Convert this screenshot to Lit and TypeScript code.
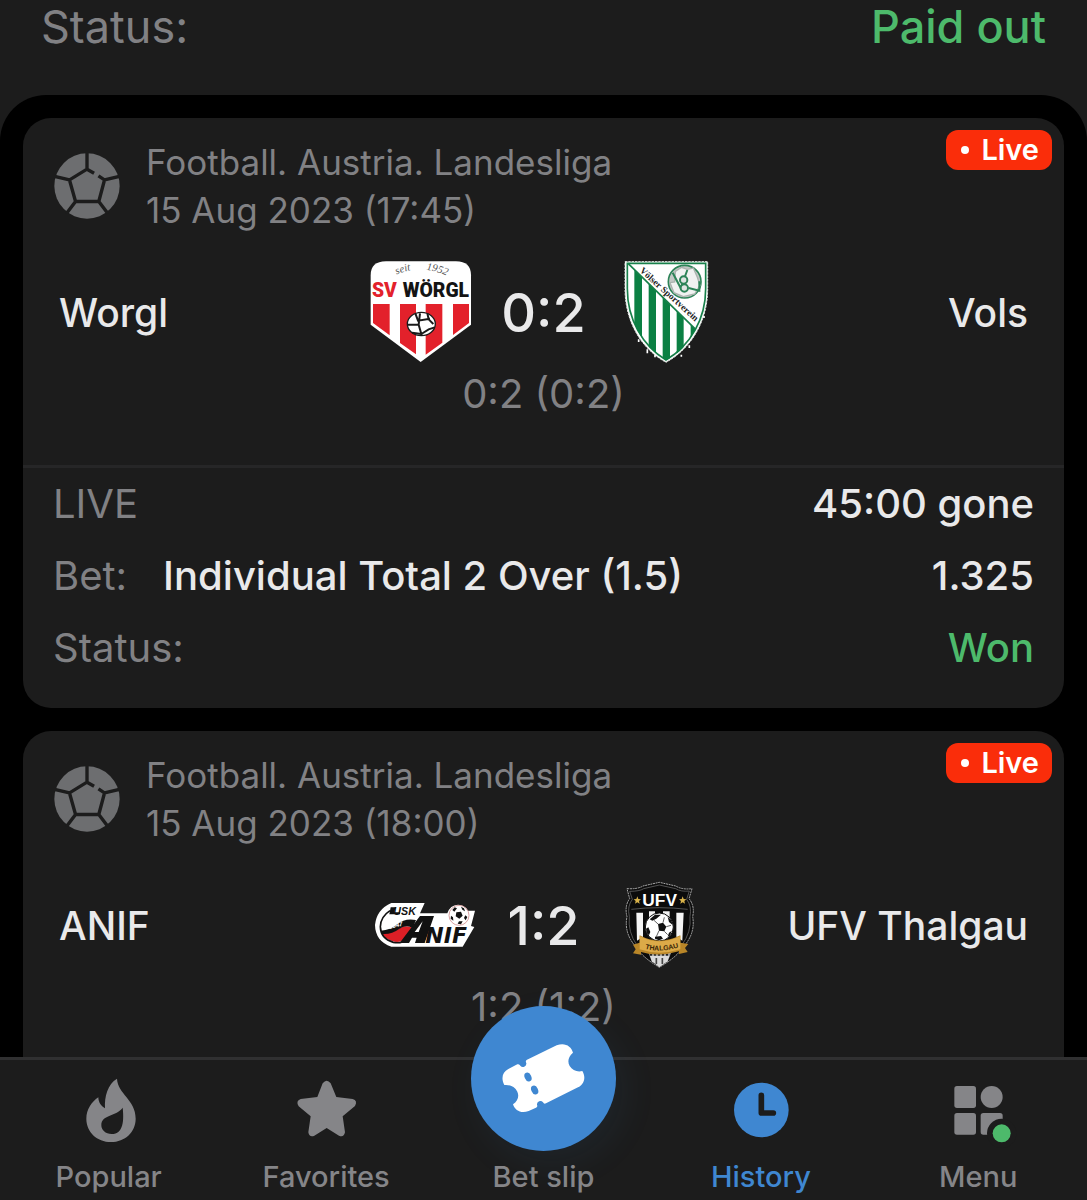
import { LitElement, html, css, nothing } from "lit";
import type { TemplateResult } from "lit";
import { customElement, property } from "lit/decorators.js";
import { classMap } from "lit/directives/class-map.js";

interface Bet {
  time: string;
  name: string;
  odds: string;
  status: string;
}

interface Match {
  league: string;
  date: string;
  home: string;
  away: string;
  homeCrest: TemplateResult;
  awayCrest: TemplateResult;
  score: string;
  periods: string;
  bet?: Bet;
}

interface Tab {
  label: string;
  href: string;
  icon: TemplateResult;
  active?: boolean;
  raised?: boolean;
}

const worglCrest = html`
  <svg viewBox="63 50 300 300" role="img" aria-label="SV Wörgl crest">
    <path d="M62 90Q62 48 108 48H318Q363 48 363 90V238L212 350L62 238Z" fill="#fff" />
    <path d="M69 176H119V270L69 233ZM150 176H198V327L150 293ZM227 176H277V292L227 328ZM309 176H357V233L309 269Z" fill="#e3212b" />
    <path id="worgl-arc" d="M126 94Q214 48 308 100" fill="none" />
    <g font-family="Liberation Serif, serif" font-style="italic" font-size="32" fill="#555">
      <text><textPath href="#worgl-arc" startOffset="8%">seit</textPath></text>
      <text><textPath href="#worgl-arc" startOffset="56%">1952</textPath></text>
    </g>
    <g font-family="Roboto, Liberation Sans, sans-serif" font-weight="900" font-size="58">
      <text x="66" y="156" fill="#e3212b">SV</text>
      <text x="158" y="156" fill="#141414">WÖRGL</text>
    </g>
    <ellipse cx="214" cy="236" rx="42" ry="35" fill="#fff" stroke="#1a1a1a" stroke-width="4" />
    <path d="M196 204L204 226L240 220M172 238H206L214 266L186 262M206 238L210 204M232 204L236 222L250 236M214 266L236 252L254 246" fill="none" stroke="#1a1a1a" stroke-width="6" />
  </svg>
`;

const volsCrest = html`
  <svg viewBox="48 50 300 300" role="img" aria-label="Völser Sportverein crest">
    <defs>
      <clipPath id="vols-field">
        <path d="M85 55L286 251C268 292 240 325 198 345C122 300 84 220 84 130Z" />
      </clipPath>
    </defs>
    <path d="M75 49H323V130C323 225 276 308 198 351C120 308 75 225 75 130Z" fill="#fff" stroke="#dfe8e2" stroke-width="3" stroke-dasharray="7 3" />
    <path d="M82 54H317V130C317 220 272 300 198 344C126 300 82 220 82 130Z" fill="#fff" stroke="#17804a" stroke-width="5" />
    <g clip-path="url(#vols-field)" fill="#0b8043">
      <path d="M103 50H126V350H103ZM146 50H168V350H146ZM188 50H210V350H188ZM230 50H251V350H230ZM272 50H290V350H272Z" />
    </g>
    <path d="M84 54L287 252" stroke="#17804a" stroke-width="5" />
    <path d="M116 282V290M142 312V324M165 328V336M244 328V334M268 300V308M312 212V218" stroke="#fff" stroke-width="5" />
    <circle cx="254" cy="109" r="49" fill="#c3c8c5" stroke="#2d8458" stroke-width="5" />
    <path d="M226 78L244 66L262 72L280 68L292 96L300 120L284 146L250 154L222 142L210 112L224 110Z" fill="#f1f2f1" stroke="#aab3ae" stroke-width="4" />
    <path d="M218 82L242 128L262 74M266 128L298 136V108" fill="none" stroke="#2d8458" stroke-width="6" />
    <circle cx="251" cy="104" r="11" fill="#dfe3e1" stroke="#2d8458" stroke-width="6" />
    <circle cx="253" cy="128" r="11" fill="#dfe3e1" stroke="#2d8458" stroke-width="6" />
    <path id="vols-line" d="M118 78L300 242" fill="none" />
    <text font-family="Liberation Serif, serif" font-weight="700" font-size="28" fill="#1d1d1d">
      <textPath href="#vols-line">Völser Sportverein</textPath>
    </text>
  </svg>
`;

const anifCrest = html`
  <svg viewBox="51 15 300 300" role="img" aria-label="USK Anif crest">
    <path d="M94 99H194L180 130H262Q270 105 294 104Q310 104 318 122H345L333 168L343 171L308 230H94Q46 214 45 165Q50 118 94 99Z" fill="#fff" />
    <path d="M66 190Q98 190 120 174Q138 164 160 174L142 206Q118 222 94 212Q74 206 66 190Z" fill="#dc1f26" />
    <path d="M62 182Q92 180 112 162Q134 144 168 150L158 174Q138 162 116 178Q96 194 66 192Z" fill="#111" />
    <path d="M90 122Q62 140 61 170Q62 206 100 217Q124 222 140 208" fill="none" stroke="#111" stroke-width="5" />
    <path d="M92 112H108L102 127H120V133H88Z" fill="#111" />
    <text x="100" y="134" font-family="Liberation Sans, sans-serif" font-weight="700" font-style="italic" font-size="32" fill="#111">USK</text>
    <text x="88" y="177" transform="rotate(-14 88 177)" font-family="Liberation Sans, sans-serif" font-weight="700" font-style="italic" font-size="19" fill="#fff">1947</text>
    <path d="M180 138H222L194 219H165L170 203H156L147 219H119ZM164 186H176L188 154Z" fill="#111" fill-rule="evenodd" />
    <text x="196" y="218" font-family="DejaVu Sans, sans-serif" font-weight="700" font-style="italic" font-size="66" fill="#111">NIF</text>
    <circle cx="297" cy="136" r="30" fill="#fff" stroke="#d9a3a3" stroke-width="3" />
    <path d="M289 127L303 125L308 137L298 146L287 139ZM277 120L284 112L291 115L283 125ZM303 110L312 115L315 124L307 119ZM316 136L322 141L317 151L312 144ZM297 154L308 154L303 163L293 161ZM273 137L279 142L280 152L272 146Z" fill="#111" />
  </svg>
`;

const ufvCrest = html`
  <svg viewBox="33 15 300 300" role="img" aria-label="UFV Thalgau crest">
    <path d="M84 56Q116 58 132 48L181 37L230 48Q250 60 279 56L270 86Q288 108 281 140Q290 190 252 232Q232 262 181 292Q130 262 112 232Q74 190 84 140Q76 108 92 86Z" fill="#0b0b0b" stroke="#a9a9a9" stroke-width="3" stroke-dasharray="6 2" />
    <path d="M92 64Q122 64 134 56L181 45L230 56Q246 66 271 63L263 88Q279 108 273 140Q278 186 248 226M92 64L100 88Q84 108 91 140Q86 186 114 226" fill="none" stroke="#777" stroke-width="2" />
    <path d="M97 118Q180 108 266 118" fill="none" stroke="#777" stroke-width="2" />
    <path d="M112 128H132V200L114 212ZM150 124H168V150H150ZM192 124H212V150H192ZM232 128H254L250 212L232 200Z" fill="#f4f4f4" />
    <text x="130" y="109" font-family="Liberation Sans, sans-serif" font-weight="700" font-size="52" fill="#fff">UFV</text>
    <path d="M115 79L118 87L126 88L120 93L122 101L115 97L108 101L110 93L104 88L112 87ZM251 79L254 87L262 88L256 93L258 101L251 97L244 101L246 93L240 88L248 87Z" fill="#d8b24a" />
    <circle cx="181" cy="171" r="42" fill="#fff" stroke="#0b0b0b" stroke-width="3" />
    <path d="M177 162L192 158L202 170L196 184L180 182ZM152 148L168 134L186 134L172 146L160 152ZM206 140L218 152L220 164L210 156ZM141 176L148 172L154 186L150 196L144 190ZM168 200L186 198L192 206L180 211L168 206ZM210 188L219 182L212 198L206 200Z" fill="#111" />
    <path d="M192 158L196 142M202 170L216 166M196 184L206 194M180 182L172 200M177 162L164 150" stroke="#111" stroke-width="2" />
    <path d="M148 246L218 244L206 274L181 292L158 274Z" fill="#dadada" />
    <path d="M152 254H214" stroke="#222" stroke-width="7" stroke-dasharray="8 4" />
    <path d="M172 264V282M190 264V282" stroke="#444" stroke-width="5" />
    <path d="M102 224L122 218V196Q180 228 244 196V218L268 222L258 234L266 246L240 252V244Q180 262 126 246V254L102 250L110 238Z" fill="#b98628" />
    <path d="M122 198Q180 230 244 198V238Q180 258 122 238Z" fill="#dcaa48" />
    <path id="ufv-arc" d="M138 236Q182 249 240 232" fill="none" />
    <text font-family="Liberation Sans, sans-serif" font-weight="700" font-size="21" fill="#3a2506">
      <textPath href="#ufv-arc">THALGAU</textPath>
    </text>
  </svg>
`;

const ballIcon = html`
  <svg viewBox="43 44 196 196" aria-hidden="true">
    <circle cx="141" cy="142" r="97" fill="#6d6e70" />
    <path
      d="M141 40V92M162 104L141 92L89 124L107 188H176L193 124L175 112M193 124L242 112M89 124L40 112M107 188L80 224M176 188L203 224"
      fill="none"
      stroke="#1c1c1c"
      stroke-width="10"
    />
  </svg>
`;

const flameIcon = html`
  <svg class="glyph" viewBox="230 114 192 192" aria-hidden="true">
    <path
      fill-rule="evenodd"
      d="M350 116C352 162 406 178 406 236C406 276 374 306 332 306C290 306 258 276 258 236C258 208 274 186 294 172C294 186 302 198 314 205C312 170 322 132 350 116ZM367 203C371 240 370 282 334 282C315 282 303 270 303 256C303 222 345 232 367 203Z"
    />
  </svg>
`;

const starIcon = html`
  <svg class="glyph" viewBox="882 114 192 192" aria-hidden="true">
    <path
      d="M968 130Q980 114 992 130L1009 171L1058 177Q1074 182 1065 198L1028 229L1035 277Q1031 294 1017 287L980 264L943 287Q928 293 925 277L932 229L896 199Q886 183 902 177L952 171Z"
    />
  </svg>
`;

const ticketIcon = html`
  <svg viewBox="95 78 435 435" aria-hidden="true">
    <path
      fill="#fff"
      d="M195 315C184 294 190 276 207 267L234 253Q240 251 243 257A10 10 0 0 0 261 250Q257 242 263 239L352 196C376 186 396 198 401 218C386 230 384 246 391 258C399 271 414 277 429 273C442 295 432 314 416 322L320 370Q314 373 311 367A10 10 0 0 0 293 374Q296 380 290 383L268 393C246 402 227 392 221 373C236 363 240 349 234 335C227 320 210 313 195 315Z"
    />
    <ellipse cx="266" cy="291" rx="10" ry="14" transform="rotate(-24 266 291)" fill="#3f87d1" />
    <ellipse cx="286" cy="330" rx="10" ry="14" transform="rotate(-24 286 330)" fill="#3f87d1" />
  </svg>
`;

const clockIcon = html`
  <svg class="glyph" viewBox="207 114 192 192" aria-hidden="true">
    <circle cx="304" cy="210" r="82" />
    <path d="M304 166V219H340" fill="none" stroke="#1c1c1c" stroke-width="17" stroke-linecap="round" stroke-linejoin="round" />
  </svg>
`;

const menuIcon = html`
  <svg class="glyph" viewBox="859 114 192 192" aria-hidden="true">
    <rect x="884" y="138" width="65" height="66" rx="8" />
    <circle cx="996" cy="171" r="33" />
    <rect x="884" y="219" width="65" height="65" rx="8" />
    <rect x="963" y="219" width="66" height="65" rx="8" />
    <circle cx="1026" cy="280" r="44" fill="#1c1c1c" />
    <circle cx="1026" cy="280" r="27" fill="#4dba6b" />
  </svg>
`;

const matches: Match[] = [
  {
    league: "Football. Austria. Landesliga",
    date: "15 Aug 2023 (17:45)",
    home: "Worgl",
    away: "Vols",
    homeCrest: worglCrest,
    awayCrest: volsCrest,
    score: "0:2",
    periods: "0:2 (0:2)",
    bet: {
      time: "45:00 gone",
      name: "Individual Total 2 Over (1.5)",
      odds: "1.325",
      status: "Won",
    },
  },
  {
    league: "Football. Austria. Landesliga",
    date: "15 Aug 2023 (18:00)",
    home: "ANIF",
    away: "UFV Thalgau",
    homeCrest: anifCrest,
    awayCrest: ufvCrest,
    score: "1:2",
    periods: "1:2 (1:2)",
  },
];

const tabs: Tab[] = [
  { label: "Popular", href: "#popular", icon: flameIcon },
  { label: "Favorites", href: "#favorites", icon: starIcon },
  { label: "Bet slip", href: "#bet-slip", icon: ticketIcon, raised: true },
  { label: "History", href: "#history", icon: clockIcon, active: true },
  { label: "Menu", href: "#menu", icon: menuIcon },
];

@customElement("match-card")
export class MatchCard extends LitElement {
  @property({ attribute: false }) match!: Match;

  static styles = css`
    :host {
      display: block;
      position: relative;
      padding-bottom: 24px;
      border-radius: 28px;
      background: #1c1c1c;
    }
    .event {
      padding: 20px 36px 47px;
    }
    .meta {
      display: flex;
      align-items: center;
      gap: 26px;
      margin-left: -5px;
      color: #818184;
      font-size: 35px;
      line-height: 48px;
    }
    .sport {
      display: flex;
      width: 66px;
      height: 66px;
    }
    .meta p,
    .periods {
      margin: 0;
    }
    .teams {
      display: grid;
      grid-template-columns: 1fr auto 1fr;
      align-items: center;
      margin-top: 28px;
      color: #e9e9ea;
      font-size: 39px;
      font-weight: 500;
    }
    .away {
      text-align: right;
    }
    .result {
      display: flex;
      align-items: center;
      gap: 30px;
    }
    .crest {
      display: flex;
      width: 100px;
      height: 100px;
    }
    .crest svg {
      overflow: visible;
    }
    svg {
      width: 100%;
      height: 100%;
    }
    .score {
      font-size: 54px;
    }
    .periods {
      margin-top: 8px;
      color: #818184;
      font-size: 40px;
      line-height: 48px;
      text-align: center;
    }
    .live {
      position: absolute;
      top: 12px;
      right: 12px;
      display: flex;
      align-items: center;
      gap: 12px;
      padding: 0 13px 0 15px;
      border-radius: 12px;
      background: #fa2d0a;
      color: #fff;
      font-size: 29px;
      font-weight: 600;
      line-height: 40px;
    }
    .dot {
      width: 8px;
      height: 8px;
      border-radius: 50%;
      background: #fff;
    }
    .bet {
      margin: 0;
      padding: 0 30px;
      border-top: 3px solid #262627;
      font-size: 40px;
      line-height: 72px;
    }
    .row {
      display: flex;
      gap: 36px;
    }
    .row dt {
      color: #818184;
    }
    .row dd {
      margin: 0;
      color: #e9e9ea;
      font-weight: 500;
    }
    .row .end {
      margin-left: auto;
    }
    .row .won {
      color: #4dba6b;
    }
  `;

  render() {
    const m = this.match;
    return html`
      <article>
        <span class="live"><span class="dot"></span>Live</span>
        <div class="event">
          <div class="meta">
            <span class="sport">${ballIcon}</span>
            <div>
              <p>${m.league}</p>
              <p>${m.date}</p>
            </div>
          </div>
          <div class="teams">
            <span>${m.home}</span>
            <div class="result">
              <span class="crest">${m.homeCrest}</span>
              <span class="score">${m.score}</span>
              <span class="crest">${m.awayCrest}</span>
            </div>
            <span class="away">${m.away}</span>
          </div>
          <p class="periods">${m.periods}</p>
        </div>
        ${m.bet
          ? html`
              <dl class="bet">
                <div class="row">
                  <dt>LIVE</dt>
                  <dd class="end">${m.bet.time}</dd>
                </div>
                <div class="row">
                  <dt>Bet:</dt>
                  <dd>${m.bet.name}</dd>
                  <dd class="end">${m.bet.odds}</dd>
                </div>
                <div class="row">
                  <dt>Status:</dt>
                  <dd class="end won">${m.bet.status}</dd>
                </div>
              </dl>
            `
          : nothing}
      </article>
    `;
  }
}

@customElement("tab-bar")
export class TabBar extends LitElement {
  @property({ attribute: false }) tabs: Tab[] = [];

  static styles = css`
    :host {
      display: block;
      position: relative;
      z-index: 1;
      border-top: 3px solid #303031;
      background: #1c1c1c;
    }
    .bar {
      display: grid;
      grid-template-columns: repeat(5, 1fr);
      align-items: end;
      padding: 18px 0 3px;
    }
    .tab {
      display: flex;
      flex-direction: column;
      align-items: center;
      color: #858588;
      font-size: 29px;
      font-weight: 500;
      line-height: 40px;
      text-decoration: none;
    }
    .active {
      color: #3f87d1;
    }
    .icon {
      display: flex;
      width: 64px;
      height: 64px;
      margin-bottom: 15px;
    }
    .raised .icon {
      width: 145px;
      height: 145px;
      margin-top: -72px;
      margin-bottom: 6px;
      border-radius: 50%;
      background: #3f87d1;
      box-shadow: 8px 12px 36px rgba(63, 135, 209, 0.08);
    }
    svg {
      width: 100%;
      height: 100%;
    }
    .glyph {
      fill: currentColor;
      overflow: visible;
    }
  `;

  render() {
    return html`
      <nav class="bar" aria-label="Main">
        ${this.tabs.map(
          (t) => html`
            <a
              class=${classMap({ tab: true, active: !!t.active, raised: !!t.raised })}
              href=${t.href}
              aria-current=${t.active ? "page" : nothing}
            >
              <span class="icon">${t.icon}</span>
              <span>${t.label}</span>
            </a>
          `
        )}
      </nav>
    `;
  }
}

@customElement("app-root")
export class AppRoot extends LitElement {
  static styles = css`
    :host {
      display: flex;
      flex-direction: column;
      height: 100vh;
      background: #1c1c1c;
      font-family: Inter, "Liberation Sans", sans-serif;
    }
    .content {
      flex: 1;
      min-height: 0;
      overflow-y: auto;
      scrollbar-width: none;
    }
    .summary {
      display: flex;
      justify-content: space-between;
      padding: 0 41px 41px;
      color: #818184;
      font-size: 45px;
      line-height: 54px;
    }
    .paid {
      color: #4dba6b;
      font-weight: 500;
    }
    .list {
      display: flex;
      flex-direction: column;
      gap: 23px;
      padding: 23px;
      border-radius: 46px 46px 0 0;
      background: #000;
    }
  `;

  render() {
    return html`
      <main class="content">
        <div class="summary">
          <span>Status:</span>
          <span class="paid">Paid out</span>
        </div>
        <section class="list">
          ${matches.map((m) => html`<match-card .match=${m}></match-card>`)}
        </section>
      </main>
      <tab-bar .tabs=${tabs}></tab-bar>
    `;
  }
}
